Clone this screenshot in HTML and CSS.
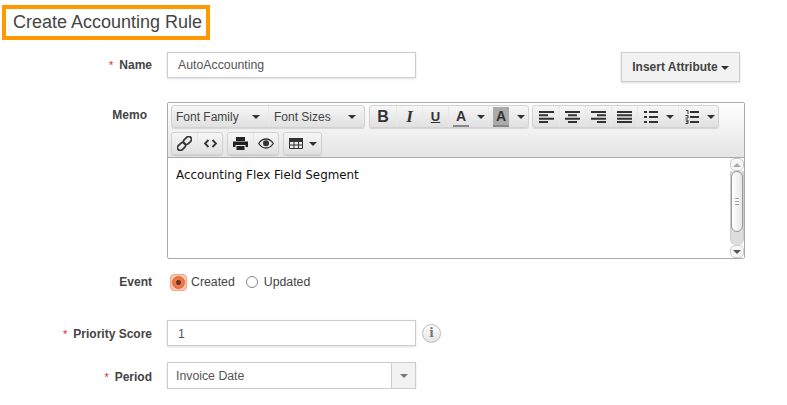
FILE: index.html
```html
<!DOCTYPE html>
<html>
  <head>
    <title>Create Accounting Rule</title>
    <link rel="stylesheet" href="styles.css">
  </head>
  <body>
    <h1 class="page-title">Create Accounting Rule</h1>
    <form class="rule-form">
      <div class="row row-name">
        <label class="row-label"><span class="req">*</span>Name</label>
        <div class="text-input name-input">AutoAccounting</div>
        <button type="button" class="insert-btn">Insert Attribute<span class="caret"></span></button>
      </div>

      <div class="row row-memo">
        <label class="row-label memo-label">Memo</label>
        <div class="editor">
          <div class="toolbar">
            <div class="tool-line">
              <div class="tool-group">
                <div class="tool tool-select family">Font Family<span class="caret"></span></div>
                <div class="tool tool-select sizes">Font Sizes<span class="caret"></span></div>
              </div>
              <div class="tool-group">
                <div class="tool glyph bold">B</div>
                <div class="tool glyph italic">I</div>
                <div class="tool glyph under">U</div>
                <div class="tool tool-wide"><span class="color-a">A</span><span class="caret"></span></div>
                <div class="tool tool-wide"><span class="color-a active">A</span><span class="caret"></span></div>
              </div>
              <div class="tool-group align-group">
                <div class="tool">
                  <svg width="15" height="12" viewBox="0 0 15 12"><path d="M0 0h15v2H0zM0 3.300h9v2H0zM0 6.700h15v2H0zM0 10h9v2H0z" fill="#333"/></svg>
                </div>
                <div class="tool">
                  <svg width="15" height="12" viewBox="0 0 15 12"><path d="M0 0h15v2H0zM3 3.300h9v2H3zM0 6.700h15v2H0zM3 10h9v2H3z" fill="#333"/></svg>
                </div>
                <div class="tool">
                  <svg width="15" height="12" viewBox="0 0 15 12"><path d="M0 0h15v2H0zM6 3.300h9v2H6zM0 6.700h15v2H0zM6 10h9v2H6z" fill="#333"/></svg>
                </div>
                <div class="tool">
                  <svg width="15" height="12" viewBox="0 0 15 12"><path d="M0 0h15v2H0zM0 3.300h15v2H0zM0 6.700h15v2H0zM0 10h15v2H0z" fill="#333"/></svg>
                </div>
                <div class="tool tool-wide list-tool">
                  <svg width="14" height="12" viewBox="0 0 14 12"><path d="M0 0h3v2H0zM5 0h9v2H5zM0 5h3v2H0zM5 5h9v2H5zM0 10h3v2H0zM5 10h9v2H5z" fill="#333"/></svg>
                  <span class="caret"></span>
                </div>
                <div class="tool tool-wide num-tool">
                  <svg width="14" height="14" viewBox="0 0 14 14"><path d="M5 1h9v2H5zM5 6h9v2H5zM5 11h9v2H5z" fill="#333"/><path d="M1 .5h2v3.500M.5 5.500H3v2.500H.5M.5 10H3v3.500H.5M1 11.700h2" fill="none" stroke="#333"/></svg>
                  <span class="caret"></span>
                </div>
              </div>
            </div>
            <div class="tool-line">
              <div class="tool-group small-tools">
                <div class="tool">
                  <svg width="15" height="15" viewBox="0 0 15 15"><g fill="none" stroke="#333" stroke-width="1.700"><rect x="6" y="1.700" width="9" height="5.600" rx="2.800" transform="rotate(-45 10.500 4.500)"/><rect x="0" y="7.700" width="9" height="5.600" rx="2.800" transform="rotate(-45 4.500 10.500)"/></g></svg>
                </div>
                <div class="tool">
                  <svg width="13" height="9" viewBox="0 0 13 9"><path d="M4.500 1L1 4.500 4.500 8M8.500 1L12 4.500 8.500 8" fill="none" stroke="#333" stroke-width="1.800"/></svg>
                </div>
              </div>
              <div class="tool-group small-tools">
                <div class="tool">
                  <svg width="15" height="13" viewBox="0 0 15 13"><path d="M3 0h9v4H3zM0 4.500h15V10h-2.500V8h-10v2H0zM3.500 9h8v4h-8z" fill="#222"/></svg>
                </div>
                <div class="tool">
                  <svg width="16" height="11" viewBox="0 0 16 11"><path d="M.7 5.500C3 2 5.500 1 8 1s5 1 7.300 4.500C13 9 10.500 10 8 10S3 9 .7 5.500z" fill="none" stroke="#333" stroke-width="1.300"/><circle cx="8" cy="5.300" r="3" fill="#333"/></svg>
                </div>
              </div>
              <div class="tool-group">
                <div class="tool tool-table">
                  <svg width="14" height="11" viewBox="0 0 14 11"><path d="M.5.500h13v10H.500zM.5 3.500h13M.5 7h13M5 3.500v7M9.500 3.500v7" fill="none" stroke="#333"/><path d="M0 0h14v3H0z" fill="#333"/></svg>
                  <span class="caret"></span>
                </div>
              </div>
            </div>
          </div>
          <div class="editor-body">
            <div class="editor-text">Accounting Flex Field Segment</div>
            <div class="scrollbar">
              <div class="scroll-btn"><span class="arrow-up"></span></div>
              <div class="scroll-track">
                <div class="scroll-thumb"><span class="grip"></span></div>
              </div>
              <div class="scroll-btn"><span class="arrow-down"></span></div>
            </div>
          </div>
        </div>
      </div>

      <div class="row row-event">
        <label class="row-label">Event</label>
        <div class="radio-box"><span class="radio-on"></span></div>
        <span class="radio-text">Created</span>
        <span class="radio-off"></span>
        <span class="radio-text">Updated</span>
      </div>

      <div class="row row-priority">
        <label class="row-label"><span class="req">*</span>Priority Score</label>
        <div class="text-input name-input score-input">1</div>
        <span class="info-icon">i</span>
      </div>

      <div class="row row-period">
        <label class="row-label"><span class="req">*</span>Period</label>
        <div class="select-input">
          <span class="select-value">Invoice Date</span>
          <span class="select-arrow"><span class="arrow-down dark"></span></span>
        </div>
      </div>
    </form>
  </body>
</html>
```

FILE: styles.css
```css
* {
  box-sizing: border-box;
}

body {
  margin: 0;
  font-family: "Liberation Sans", Arial, sans-serif;
  font-size: 12px;
  color: #444;
  background-color: #fff;
  overflow: hidden;
}

.page-title {
  display: inline-block;
  margin: 5px 0 0 2px;
  padding: 0 4px 0 7px;
  height: 35px;
  line-height: 26px;
  border: 4px solid #f90;
  font-size: 18px;
  font-weight: normal;
  color: #444;
  vertical-align: top;
}

.rule-form {
  display: block;
}

.row {
  display: flex;
  align-items: flex-start;
}

.row-label {
  width: 152px;
  margin-right: 15px;
  flex: none;
  text-align: right;
  font-weight: bold;
  font-size: 12px;
  color: #444;
}

.req {
  color: #e22;
  font-weight: normal;
  margin-right: 6px;
  font-size: 11px;
}

.row-name {
  margin-top: 12px;
}

.row-name .row-label {
  padding-top: 6px;
}

.text-input {
  height: 26px;
  line-height: 24px;
  padding-left: 10px;
  border: 1px solid #ccc;
  box-shadow: 0 1px 2px rgba(0, 0, 0, 0.12);
  font-size: 12.3px;
  color: #555;
}

.score-input {
  line-height: 26px;
}

.name-input {
  width: 249px;
}

.insert-btn {
  width: 119px;
  height: 30px;
  margin-left: 205px;
  padding: 0;
  border: 1px solid #ccc;
  background-color: #f2f2f2;
  box-shadow: 0 1px 2px rgba(0, 0, 0, 0.15);
  font-family: "Liberation Sans", Arial, sans-serif;
  font-size: 12px;
  font-weight: bold;
  color: #444;
}

.insert-btn .caret {
  margin-left: 3px;
}

.caret {
  display: inline-block;
  flex: none;
  width: 0;
  height: 0;
  border-left: 4px solid transparent;
  border-right: 4px solid transparent;
  border-top: 4px solid #333;
  vertical-align: middle;
}

.row-memo {
  margin-top: 20px;
}

.memo-label {
  padding-top: 6px;
  padding-right: 5px;
}

.editor {
  width: 578px;
  height: 157px;
  border: 1px solid #aaa;
  border-radius: 2px;
}

.toolbar {
  height: 55px;
  padding: 2px 3px 0 3px;
  border-bottom: 1px solid #aaa;
  background: linear-gradient(#fff, #e4e4e4);
}

.tool-line {
  display: flex;
  gap: 4px;
  height: 23px;
  margin-bottom: 4px;
}

.tool-group {
  display: flex;
  border: 1px solid #d2d2d2;
  border-radius: 3px;
  background: linear-gradient(#f6f6f6, #e0e0e0);
  box-shadow: 0 1px 1px rgba(0, 0, 0, 0.12);
}

.align-group {
  margin-left: -1px;
}

.tool {
  display: flex;
  align-items: center;
  justify-content: center;
  width: 26px;
  border-left: 1px solid #e8e8e8;
  color: #333;
}

.tool:first-child {
  border-left: none;
}

.small-tools .tool {
  width: 25px;
}

.tool-select {
  justify-content: space-between;
  padding: 0 8px 0 4px;
  font-size: 12px;
  color: #444;
}

.family {
  width: 96px;
}

.sizes {
  width: 96px;
  padding-left: 5px;
}

.tool-wide {
  width: 40px;
  gap: 8px;
  justify-content: flex-start;
  padding-left: 4px;
}

.list-tool {
  width: 41px;
  padding-left: 6px;
}

.num-tool {
  width: 40px;
  padding-left: 6px;
}

.tool-table {
  width: 37px;
  gap: 6px;
}

.glyph {
  font-size: 16px;
}

.bold {
  font-weight: bold;
}

.italic {
  font-family: "Liberation Serif", serif;
  font-weight: bold;
  font-style: italic;
  font-size: 17px;
}

.under {
  font-weight: bold;
  font-size: 13px;
  text-decoration: underline;
}

.color-a {
  display: block;
  flex: none;
  width: 16px;
  height: 20px;
  margin-top: 1px;
  line-height: 18px;
  text-align: center;
  font-size: 14px;
  font-weight: bold;
  border-bottom: 2px solid #888;
}

.color-a.active {
  background-color: #aaa;
}

.editor-body {
  display: flex;
  height: 100px;
}

.editor-text {
  flex: 1;
  padding: 10px 8px;
  font-family: "DejaVu Sans", Verdana, sans-serif;
  font-size: 11.88px;
  color: #111;
}

.scrollbar {
  display: flex;
  flex-direction: column;
  width: 14px;
  background-color: #fff;
}

.scroll-btn {
  display: flex;
  align-items: center;
  justify-content: center;
  height: 13px;
  border: 1px solid #ccc;
  border-radius: 5px;
  background-color: #f6f6f6;
}

.scroll-track {
  flex: 1;
  background-color: #ddd;
  border-left: 1px solid #ccc;
  border-right: 1px solid #ccc;
  border-radius: 0 0 6px 6px;
}

.scroll-thumb {
  display: flex;
  align-items: center;
  justify-content: center;
  height: 61px;
  border: 1px solid #999;
  border-radius: 6px;
  background: linear-gradient(to right, #fff, #e6e6e6);
}

.grip {
  display: block;
  width: 4px;
  height: 7px;
  border-top: 1px solid #999;
  border-bottom: 1px solid #999;
  background: linear-gradient(#fff 2px, #999 2px, #999 3px, #fff 3px);
}

.arrow-up {
  width: 0;
  height: 0;
  border-left: 4px solid transparent;
  border-right: 4px solid transparent;
  border-bottom: 4px solid #aaa;
}

.arrow-down {
  width: 0;
  height: 0;
  border-left: 4px solid transparent;
  border-right: 4px solid transparent;
  border-top: 4px solid #555;
}

.arrow-down.dark {
  display: block;
  border-top-color: #777;
}

.row-event {
  align-items: center;
  height: 18px;
  margin-top: 14px;
  font-size: 12.3px;
}

.radio-box {
  display: flex;
  align-items: center;
  justify-content: center;
  width: 17px;
  height: 17px;
  margin-left: 3px;
  border: 1px solid #f5a380;
  border-radius: 4px;
  background-color: #fbc9b2;
}

.radio-on {
  display: block;
  flex: none;
  width: 13px;
  height: 13px;
  border-radius: 50%;
  border: 1px solid #d9622f;
  background: radial-gradient(circle, #6b3320 0, #6b3320 2px, #ec7748 3px);
}

.radio-text {
  margin-left: 4px;
  color: #444;
}

.radio-off {
  display: block;
  width: 12px;
  height: 12px;
  margin-left: 11px;
  margin-right: 2px;
  border: 1px solid #888;
  border-radius: 50%;
  background-color: #fff;
}

.row-priority {
  margin-top: 29px;
  align-items: center;
}

.row-priority .row-label,
.row-period .row-label {
  padding-top: 2px;
}

.info-icon {
  display: block;
  width: 19px;
  height: 19px;
  margin-left: 6px;
  border: 1px solid #bbb;
  border-radius: 50%;
  background: linear-gradient(#fff, #e4e4e4);
  line-height: 17px;
  text-align: center;
  font-family: "DejaVu Serif", serif;
  font-size: 12px;
  font-weight: bold;
  color: #777;
}

.row-period {
  margin-top: 16px;
  align-items: center;
}

.select-input {
  display: flex;
  width: 249px;
  height: 27px;
  border: 1px solid #ccc;
  box-shadow: 0 1px 2px rgba(0, 0, 0, 0.12);
}

.select-value {
  flex: 1;
  padding-left: 8px;
  line-height: 27px;
  font-size: 12.3px;
  color: #555;
}

.select-arrow {
  display: flex;
  align-items: center;
  justify-content: center;
  width: 24px;
  border-left: 1px solid #ccc;
  background-color: #f2f2f2;
}
```
